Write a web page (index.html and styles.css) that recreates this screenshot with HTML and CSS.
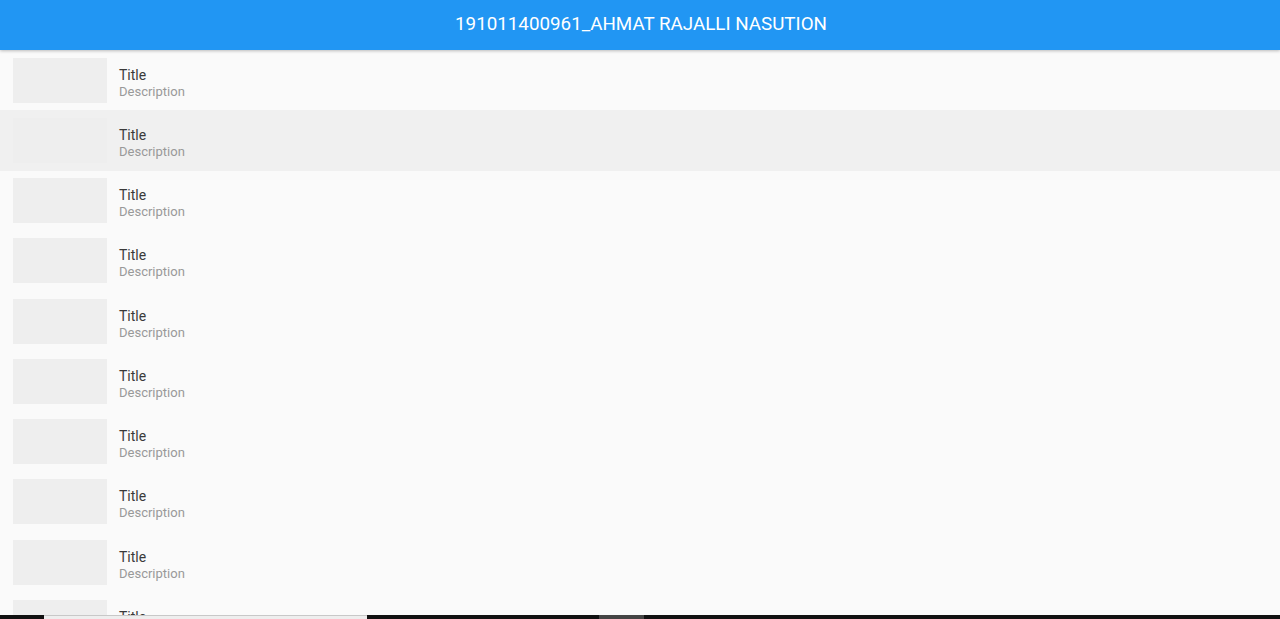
FILE: index.html
```html
<!DOCTYPE html>
<html>
<head>
<meta charset="utf-8">
<link rel="stylesheet" href="styles.css">
</head>
<body>
<header class="appbar">191011400961_AHMAT RAJALLI NASUTION</header>
<main class="list">
  <div class="row"><div class="thumb"></div><div class="text"><div class="title">Title</div><div class="desc">Description</div></div></div>
  <div class="row active"><div class="thumb"></div><div class="text"><div class="title">Title</div><div class="desc">Description</div></div></div>
  <div class="row"><div class="thumb"></div><div class="text"><div class="title">Title</div><div class="desc">Description</div></div></div>
  <div class="row"><div class="thumb"></div><div class="text"><div class="title">Title</div><div class="desc">Description</div></div></div>
  <div class="row"><div class="thumb"></div><div class="text"><div class="title">Title</div><div class="desc">Description</div></div></div>
  <div class="row"><div class="thumb"></div><div class="text"><div class="title">Title</div><div class="desc">Description</div></div></div>
  <div class="row"><div class="thumb"></div><div class="text"><div class="title">Title</div><div class="desc">Description</div></div></div>
  <div class="row"><div class="thumb"></div><div class="text"><div class="title">Title</div><div class="desc">Description</div></div></div>
  <div class="row"><div class="thumb"></div><div class="text"><div class="title">Title</div><div class="desc">Description</div></div></div>
  <div class="row"><div class="thumb"></div><div class="text"><div class="title">Title</div><div class="desc">Description</div></div></div>
</main>
<div class="bottombar">
  <div class="seg dark s1"></div>
  <div class="seg light s2"></div>
  <div class="seg dark s3"></div>
  <div class="seg grey s4"></div>
  <div class="seg dark s5"></div>
</div>
</body>
</html>
```
FILE: styles.css
```css
html, body {
  margin: 0;
  padding: 0;
  height: 100%;
  overflow: hidden;
  background: #fafafa;
  font-family: Roboto, "Liberation Sans", sans-serif;
}
.appbar {
  position: relative;
  z-index: 2;
  height: 50px;
  box-sizing: border-box;
  padding: 0 0 2px 2px;
  background: #2196f3;
  color: #fff;
  font-size: 18.8px;
  display: flex;
  align-items: center;
  justify-content: center;
  box-shadow: 0 1px 3px rgba(0,0,0,0.25);
}
.list {
  display: flex;
  flex-direction: column;
}
.row {
  height: 60.25px;
  flex: 0 0 60.25px;
  display: flex;
  align-items: center;
  padding-left: 13px;
  gap: 12px;
  box-sizing: border-box;
}
.row.active {
  background: #f0f0f0;
}
.thumb {
  width: 94px;
  height: 45px;
  background: #eeeeee;
}
.text {
  display: flex;
  flex-direction: column;
  padding-top: 6px;
}
.title {
  font-size: 14px;
  line-height: 17px;
  color: #3a3a3a;
}
.desc {
  font-size: 13px;
  line-height: 16px;
  color: #999;
}
.bottombar {
  position: fixed;
  left: 0;
  right: 0;
  bottom: 0;
  height: 4px;
  display: flex;
  z-index: 3;
}
.seg { height: 100%; }
.dark { background: #111; }
.light { background: #eeeeee; border-top: 1px solid #c8c8c8; box-sizing: border-box; }
.grey { background: #444; }
.s1 { width: 44px; }
.s2 { width: 323px; }
.s3 { width: 232px; }
.s4 { width: 45px; }
.s5 { flex: 1; }
```
